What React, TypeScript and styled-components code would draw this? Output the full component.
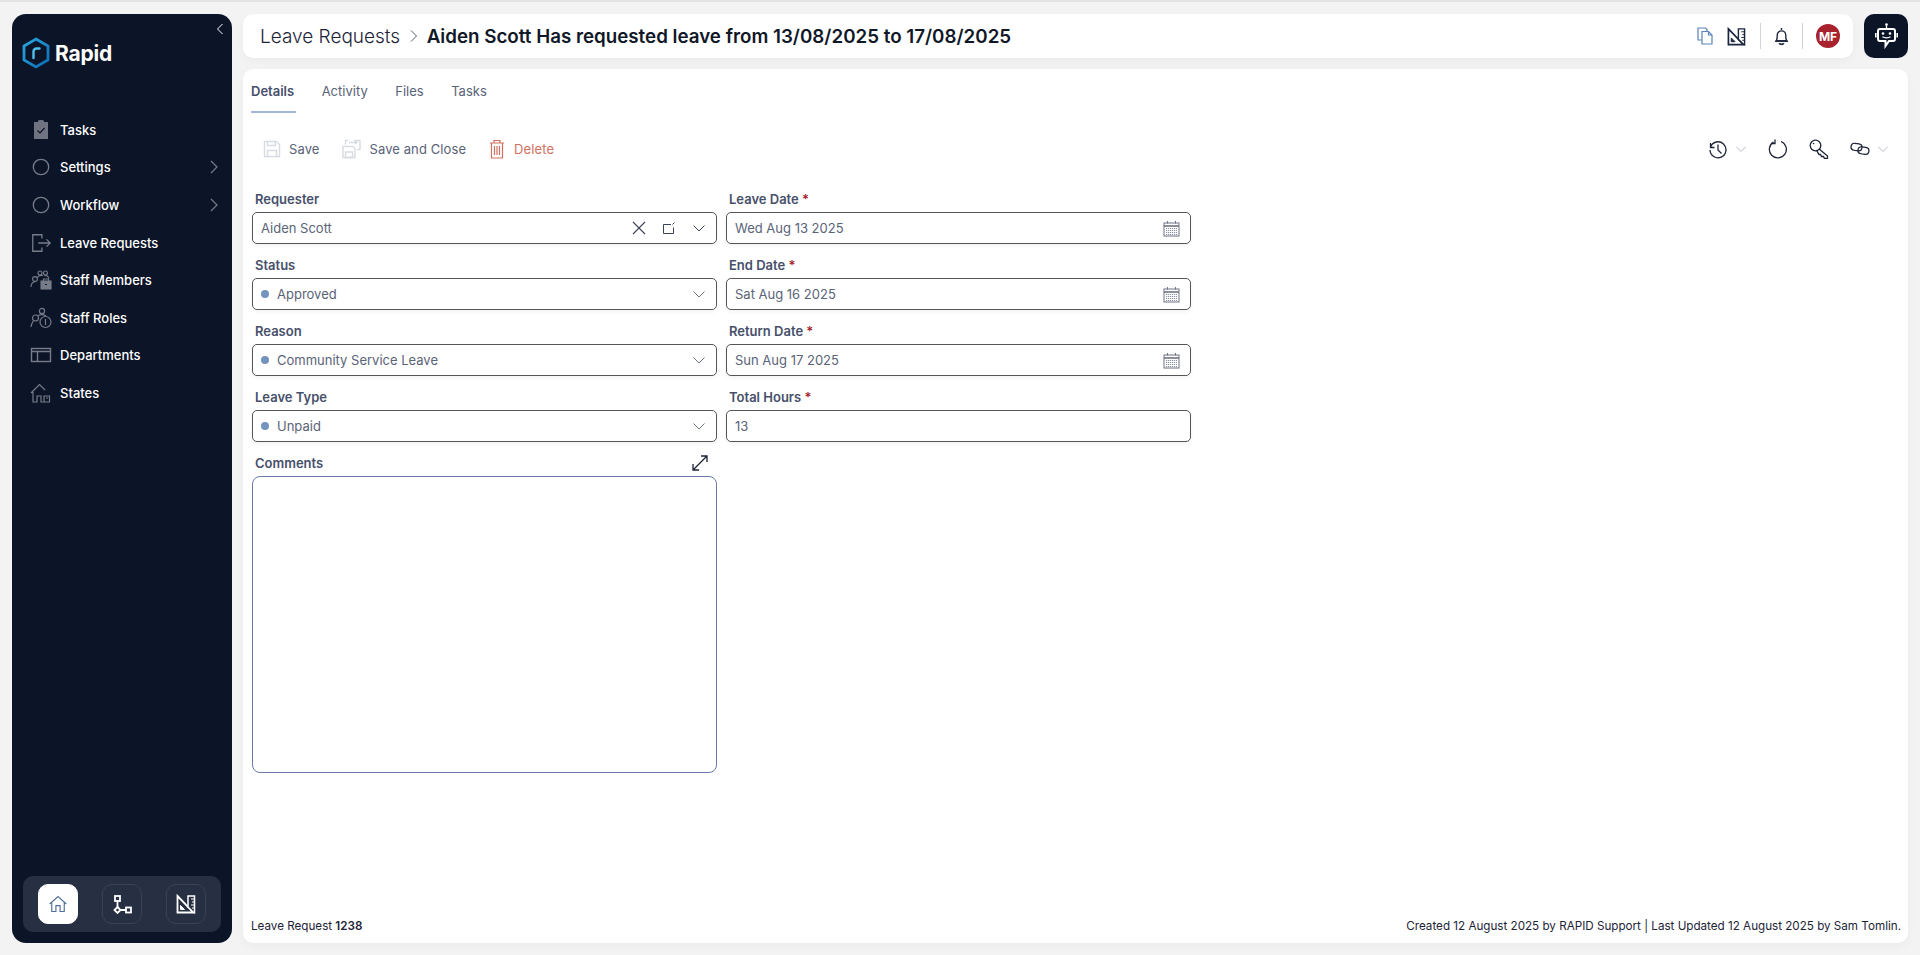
import styled, {createGlobalStyle} from "styled-components";
import type {ReactNode} from "react";

const font = `"Inter", "Open Sans", sans-serif`;

const GlobalStyle = createGlobalStyle`
    * {
        box-sizing: border-box;
    }
    html, body {
        margin: 0;
        padding: 0;
        height: 100%;
        background: #f3f3f3;
        font-family: ${font};
    }
`;

type IconProps = { size?: number; color?: string };

const TasksIcon = () => (
    <svg width="20" height="20" viewBox="0 0 20 20">
        <path d="M3 3h4V1.500h1.200A1.800 1.800 0 0 1 11.800 1.500H13V3h4v17H3z" fill="#6f7480" transform="translate(0 -1)"/>
        <path d="M6.500 10.500l2.500 2.500 4.500-5" fill="none" stroke="#0c1428" strokeWidth="1.200"/>
    </svg>
);
const CircleIcon = () => (
    <svg width="20" height="20" viewBox="0 0 20 20">
        <circle cx="10" cy="10" r="7.700" fill="none" stroke="#777c88" strokeWidth="1.300"/>
    </svg>
);
const LeaveIcon = () => (
    <svg width="22" height="22" viewBox="0 0 24 24" fill="none" stroke="#777c88" strokeWidth="1.400">
        <path d="M13 7V3H3v18h10v-4"/>
        <path d="M9 12h13M18 8l4 4-4 4"/>
    </svg>
);
const MembersIcon = () => (
    <svg width="22" height="22" viewBox="0 0 22 22" fill="none" stroke="#777c88" strokeWidth="1.100">
        <circle cx="5" cy="10" r="2.400"/>
        <circle cx="10" cy="4" r="2"/>
        <circle cx="15.500" cy="4" r="2"/>
        <path d="M1 18c0-3 2-5 4-5.300M7 9c1-2 4-3 6-2.500M14.500 6.500c2 0 4 1 4.500 3"/>
        <rect x="11" y="12" width="10" height="8" fill="#777c88"/>
        <path d="M13.500 12v-2h5v2"/>
        <path d="M15 15.500h2" stroke="#0c1428"/>
    </svg>
);
const RolesIcon = () => (
    <svg width="22" height="22" viewBox="0 0 22 22" fill="none" stroke="#777c88" strokeWidth="1.200">
        <circle cx="5.500" cy="11" r="3"/>
        <circle cx="12" cy="4" r="2.600"/>
        <circle cx="15.500" cy="15" r="5.500"/>
        <path d="M15.500 12v6M1 20c0-2 1-4 2.500-6.500M8 9c1-1.500 5-2 8 0"/>
    </svg>
);
const DepartmentsIcon = () => (
    <svg width="22" height="22" viewBox="0 0 22 22" fill="none" stroke="#777c88" strokeWidth="1.400">
        <rect x="1.500" y="4.500" width="19" height="13"/>
        <path d="M1.500 7.500h19M7.500 7.500v10"/>
    </svg>
);
const StatesIcon = () => (
    <svg width="22" height="22" viewBox="0 0 22 22" fill="none" stroke="#777c88" strokeWidth="1.200">
        <path d="M1 11l8.500-8.500L15 8M3 10v10h4v-6h4v6h8.500v-6H14v6"/>
        <path d="M16 16h2"/>
    </svg>
);

const LogoMark = () => (
    <svg width="28" height="32" viewBox="0 0 28 32" fill="none">
        <defs>
            <linearGradient id="hex" x1="0" y1="0" x2="1" y2="1">
                <stop offset="0" stopColor="#28a8e0"/>
                <stop offset="1" stopColor="#0d6cb5"/>
            </linearGradient>
        </defs>
        <path d="M14 2l12 7v14l-12 7-12-7V9z" stroke="url(#hex)" strokeWidth="2.800"/>
        <path d="M11.500 21v-6.500a3 3 0 0 1 3-3h3" stroke="#4fc0ee" strokeWidth="2.400" strokeLinecap="round"/>
    </svg>
);

const HomeIcon = () => (
    <svg width="20" height="20" viewBox="0 0 24 24" fill="none" stroke="#51709c" strokeWidth="1.400">
        <path d="M2 12l10-9 10 9M4.500 10v11h5v-7h5v7h5V10"/>
    </svg>
);
const FlowIcon = () => (
    <svg width="19" height="19" viewBox="0 0 19 19" fill="none" stroke="#fff" strokeWidth="1.800">
        <rect x="2" y="1" width="5" height="5"/>
        <path d="M4.500 6v6M8 15h5"/>
        <path d="M4.500 12l3 3-3 3-3-3z"/>
        <rect x="13" y="12.500" width="5" height="5"/>
    </svg>
);
const RulerIcon = ({size = 20, color = "#fff", shade = "#272f43"}: IconProps & { shade?: string }) => (
    <svg width={size} height={size} viewBox="0 0 20 20" fill="none" stroke={color}>
        <path d="M1.500 2l16 16.500h-16z" strokeWidth="1.800"/>
        <path d="M4.500 11.500l4 4h-4z" fill={color} strokeWidth="1"/>
        <path d="M12 2h6.500v16.500h-1L12 13z" fill={shade} strokeWidth="1.500"/>
        <path d="M15 5h3M16 8h2M15 11h3M16 14h2" strokeWidth="1"/>
    </svg>
);
const ChevronDown = ({size = 14, color = "#6e7686"}: IconProps) => (
    <svg width={size} height={size} viewBox="0 0 14 14" fill="none" stroke={color} strokeWidth="1">
        <path d="M1.500 4.500l5.500 5.500 5.500-5.500"/>
    </svg>
);
const ChevronRight = () => (
    <svg width="12" height="16" viewBox="0 0 12 16" fill="none" stroke="#777c88" strokeWidth="1.200">
        <path d="M3 2l6 6-6 6"/>
    </svg>
);
const CalendarIcon = () => (
    <svg width="17" height="17" viewBox="0 0 17 17" fill="none" stroke="#6d7382" strokeWidth="1">
        <rect x="1" y="3" width="15" height="13" fill="#fff"/>
        <path d="M1 6h15" strokeWidth="1.600"/>
        <path d="M4.500 1v2.500M12.500 1v2.500"/>
        <path d="M3 8.500h11M3 10.500h11M3 12.500h11M3 14.500h11" strokeDasharray="1.200 0.800" stroke="#8a90a0"/>
    </svg>
);
const SaveIcon = () => (
    <svg width="18" height="18" viewBox="0 0 18 18" fill="none" stroke="#d8dbe2" strokeWidth="1.400">
        <path d="M1.500 1.500h12l3 3v12h-15z"/>
        <path d="M4.500 1.500v4h8v-4M4.500 16.500v-6h9v6"/>
    </svg>
);
const SaveCloseIcon = () => (
    <svg width="20" height="20" viewBox="0 0 20 20" fill="none" stroke="#d8dbe2" strokeWidth="1.400">
        <path d="M2 7.500h10l2 2v9H2z"/>
        <path d="M4.500 13v5.500h7V13zM7 1.500H4.500v4M13 1.500h6v9h-3M8 3.500h8M14 2l2 1.500L14 5"/>
    </svg>
);
const TrashIcon = () => (
    <svg width="18" height="20" viewBox="-2 0 18 20" fill="none" stroke="#d2705f" strokeWidth="1.200">
        <path d="M0 4h14M4 4V1.500h6V4M1.500 4v15h11V4M4.500 7v9M7 7v9M9.500 7v9"/>
    </svg>
);
const CopyIcon = () => (
    <svg width="16" height="18" viewBox="0 0 16 18" fill="none" stroke="#5a84b8" strokeWidth="1.200">
        <path d="M1 1h7.500l1.500 1.500V13H1z"/>
        <path d="M5 4.500h6.500L15 8v9H5z" fill="#fff"/>
        <path d="M11.500 4.500V8H15"/>
    </svg>
);
const BellIcon = () => (
    <svg width="15" height="19" viewBox="0 0 16 19" fill="none" stroke="#242c44" strokeWidth="1.500">
        <path d="M8 .5v2M2.500 14c1-1.500 1-3 1-6a4.500 4.500 0 0 1 9 0c0 3 0 4.500 1 6zM1 14.500h14"/>
        <path d="M5.500 16.800c1 1.500 4 1.500 5 0" strokeWidth="2"/>
    </svg>
);
const BotIcon = () => (
    <svg width="23" height="26" viewBox="0 0 23 26" fill="none" stroke="#fff" strokeWidth="2">
        <circle cx="11.500" cy="1.600" r="1.300" fill="#fff" stroke="none"/>
        <path d="M11.500 2.500v3" strokeWidth="1.300"/>
        <path d="M5 6h13a2 2 0 0 1 2 2v8a2 2 0 0 1-2 2h-4l-3.500 5v-5H5a2 2 0 0 1-2-2V8a2 2 0 0 1 2-2z"/>
        <path d="M.8 10v4.500M22.200 10v4.500" strokeWidth="1.600"/>
        <circle cx="8" cy="10.500" r="1.300" fill="#fff" stroke="none"/>
        <circle cx="15" cy="10.500" r="1.300" fill="#fff" stroke="none"/>
        <path d="M7.500 13.800c2 1.300 6 1.300 8 0" strokeWidth="1.300"/>
    </svg>
);
const HistoryIcon = () => (
    <svg width="20" height="20" viewBox="0 0 20 20" fill="none" stroke="#1d2438" strokeWidth="1.300">
        <path d="M2.500 4v4.500h4M2.500 8A8 8 0 1 1 2 11"/>
        <path d="M10 5.500V11l3.500 3.500"/>
    </svg>
);
const RefreshIcon = () => (
    <svg width="20" height="20" viewBox="0 0 20 20" fill="none" stroke="#1d2438" strokeWidth="1.300">
        <path d="M13 2.500a8.500 8.500 0 1 1-7.500.6"/>
        <path d="M7 .5v4H3"/>
    </svg>
);
const KeyIcon = () => (
    <svg width="20" height="20" viewBox="0 0 20 20" fill="none" stroke="#1d2438" strokeWidth="1.300">
        <circle cx="6.500" cy="6.500" r="5.300"/>
        <circle cx="4.500" cy="4.500" r="0.800" fill="#1d2438" stroke="none"/>
        <path d="M10.500 10.200l8 6.800V19.500h-3L14.500 17.500h-2l-1-2H10L7.800 11.700"/>
    </svg>
);
const LinkIcon = () => (
    <svg width="20" height="14" viewBox="0 0 20 14" fill="none" stroke="#1d2438" strokeWidth="1.200">
        <rect x="1" y="1.500" width="11" height="7" rx="3.500" transform="rotate(8 6 5)"/>
        <rect x="8" y="5" width="11" height="7" rx="3.500" transform="rotate(8 13 8)"/>
    </svg>
);
const ClearIcon = () => (
    <svg width="14" height="14" viewBox="0 0 14 14" fill="none" stroke="#3a4255" strokeWidth="1.100">
        <path d="M1 1l12 12M13 1L1 13"/>
    </svg>
);
const OpenIcon = () => (
    <svg width="14" height="14" viewBox="0 0 14 14" fill="none" stroke="#3a4255" strokeWidth="1">
        <path d="M9 3.500H1.500v9h10V6.500"/>
        <path d="M10.500 3.500L12.500 1.500"/>
    </svg>
);
const ExpandIcon = () => (
    <svg width="18" height="18" viewBox="0 0 18 18" fill="none" stroke="#1d2438" strokeWidth="1.300">
        <path d="M2 16L16 2M10 2h6v6M2 10v6h6"/>
    </svg>
);

const navItems = [
    {label: "Tasks", icon: <TasksIcon/>},
    {label: "Settings", icon: <CircleIcon/>, more: true},
    {label: "Workflow", icon: <CircleIcon/>, more: true},
    {label: "Leave Requests", icon: <LeaveIcon/>},
    {label: "Staff Members", icon: <MembersIcon/>},
    {label: "Staff Roles", icon: <RolesIcon/>},
    {label: "Departments", icon: <DepartmentsIcon/>},
    {label: "States", icon: <StatesIcon/>},
];

const Field = ({label, required, children}: { label: string; required?: boolean; children: ReactNode }) => (
    <FieldWrap>
        <FieldLabel>{label}{required && <Required> *</Required>}</FieldLabel>
        {children}
    </FieldWrap>
);

const SelectField = ({label, value}: { label: string; value: string }) => (
    <Field label={label}>
        <InputBox>
            <Dot/>
            <Value>{value}</Value>
            <ChevronDown/>
        </InputBox>
    </Field>
);

const DateField = ({label, value}: { label: string; value: string }) => (
    <Field label={label} required>
        <InputBox>
            <Value>{value}</Value>
            <CalendarIcon/>
        </InputBox>
    </Field>
);

export default function App() {
    return (
        <>
            <GlobalStyle/>
            <Page>
                <Sidebar>
                    <Collapse>
                        <svg width="8" height="12" viewBox="0 0 8 12" fill="none" stroke="#fff" strokeWidth="1">
                            <path d="M6.500 1l-5 5 5 5"/>
                        </svg>
                    </Collapse>
                    <Logo>
                        <LogoMark/>
                        <LogoText>Rapid</LogoText>
                    </Logo>
                    <Nav>
                        {navItems.map((item) => (
                            <NavItem key={item.label}>
                                <NavIcon>{item.icon}</NavIcon>
                                <NavLabel>{item.label}</NavLabel>
                                {item.more && <ChevronRight/>}
                            </NavItem>
                        ))}
                    </Nav>
                    <Dock>
                        <DockButton $active><HomeIcon/></DockButton>
                        <DockButton><FlowIcon/></DockButton>
                        <DockButton><RulerIcon/></DockButton>
                    </Dock>
                </Sidebar>
                <Content>
                    <TopRow>
                        <Header>
                            <Crumb>Leave Requests</Crumb>
                            <CrumbSep>
                                <svg width="10" height="14" viewBox="0 0 10 14" fill="none" stroke="#555c6c" strokeWidth="1">
                                    <path d="M2 1.500l5.500 5.500L2 12.500"/>
                                </svg>
                            </CrumbSep>
                            <Title>Aiden Scott Has requested leave from 13/08/2025 to 17/08/2025</Title>
                            <HeaderActions>
                                <HeaderIcon><CopyIcon/></HeaderIcon>
                                <HeaderIcon $gap><RulerIcon size={19} color="#1a2540" shade="#fff"/></HeaderIcon>
                                <Divider $gap/>
                                <HeaderIcon><BellIcon/></HeaderIcon>
                                <Divider/>
                                <Avatar>MF</Avatar>
                            </HeaderActions>
                        </Header>
                        <BotButton><BotIcon/></BotButton>
                    </TopRow>
                    <Card>
                        <Tabs>
                            <Tab $active>Details</Tab>
                            <Tab>Activity</Tab>
                            <Tab>Files</Tab>
                            <Tab>Tasks</Tab>
                        </Tabs>
                        <Toolbar>
                            <Action><SaveIcon/>Save</Action>
                            <Action><SaveCloseIcon/>Save and Close</Action>
                            <Action $danger><TrashIcon/>Delete</Action>
                            <ToolbarRight>
                                <ToolGroup><HistoryIcon/><ChevronDown size={12} color="#a9aeb8"/></ToolGroup>
                                <ToolGroup><RefreshIcon/></ToolGroup>
                                <ToolGroup><KeyIcon/></ToolGroup>
                                <ToolGroup><LinkIcon/><ChevronDown size={12} color="#a9aeb8"/></ToolGroup>
                            </ToolbarRight>
                        </Toolbar>
                        <Form>
                            <Field label="Requester">
                                <InputBox>
                                    <Value>Aiden Scott</Value>
                                    <RequesterIcons>
                                        <ClearIcon/>
                                        <OpenIcon/>
                                        <ChevronDown color="#3a4255"/>
                                    </RequesterIcons>
                                </InputBox>
                            </Field>
                            <DateField label="Leave Date" value="Wed Aug 13 2025"/>
                            <SelectField label="Status" value="Approved"/>
                            <DateField label="End Date" value="Sat Aug 16 2025"/>
                            <SelectField label="Reason" value="Community Service Leave"/>
                            <DateField label="Return Date" value="Sun Aug 17 2025"/>
                            <SelectField label="Leave Type" value="Unpaid"/>
                            <Field label="Total Hours" required>
                                <InputBox><Value>13</Value></InputBox>
                            </Field>
                            <CommentsField>
                                <CommentsHead>
                                    <FieldLabel>Comments</FieldLabel>
                                    <ExpandIcon/>
                                </CommentsHead>
                                <CommentsBox/>
                            </CommentsField>
                        </Form>
                        <Footer>
                            <span>Leave Request <strong>1238</strong></span>
                            <span>Created 12 August 2025 by RAPID Support | Last Updated 12 August 2025 by Sam Tomlin.</span>
                        </Footer>
                    </Card>
                </Content>
            </Page>
        </>
    );
}

const Page = styled.div`
    display: flex;
    gap: 11px;
    height: 955px;
    padding: 12px 12px 12px;
    background: #f3f3f3;
    border-top: 2px solid #e3e3e3;
`;
const Sidebar = styled.aside`
    position: relative;
    display: flex;
    flex-direction: column;
    flex: 0 0 220px;
    background: #0c1428;
    border-radius: 14px;
`;
const Collapse = styled.button`
    position: absolute;
    top: 7px;
    right: 6px;
    display: flex;
    padding: 2px;
    background: none;
    border: 0;
`;
const Logo = styled.div`
    display: flex;
    align-items: center;
    gap: 5px;
    padding: 23px 0 0 10px;
`;
const LogoText = styled.span`
    font-size: 21px;
    font-weight: 700;
    letter-spacing: -0.2px;
    color: #fff;
`;
const Nav = styled.nav`
    display: flex;
    flex-direction: column;
    padding: 42px 12px 0 18px;
`;
const NavItem = styled.div`
    display: flex;
    align-items: center;
    height: 37.6px;
`;
const NavIcon = styled.span`
    display: flex;
    justify-content: center;
    flex: 0 0 22px;
    margin-right: 8px;
`;
const NavLabel = styled.span`
    flex: 1;
    font-size: 13px;
    font-weight: 500;
    color: #fff;
`;
const Dock = styled.div`
    display: flex;
    justify-content: space-between;
    gap: 23px;
    margin: auto 11px 11px;
    padding: 8px 15px;
    background: #272f43;
    border-radius: 10px;
`;
const DockButton = styled.button<{ $active?: boolean }>`
    display: flex;
    align-items: center;
    justify-content: center;
    width: 40px;
    height: 40px;
    padding: 0;
    background: ${(p) => (p.$active ? "#fff" : "transparent")};
    border: 1px solid ${(p) => (p.$active ? "#fff" : "#3a4256")};
    border-radius: 10px;
`;
const Content = styled.main`
    display: flex;
    flex-direction: column;
    flex: 1;
    gap: 11px;
    min-width: 0;
`;
const TopRow = styled.div`
    display: flex;
    gap: 11px;
    height: 44px;
`;
const Header = styled.header`
    display: flex;
    align-items: center;
    flex: 1;
    padding: 0 13px 0 17px;
    background: #fff;
    border-radius: 10px;
    box-shadow: 0 3px 8px rgba(0, 0, 0, 0.04);
`;
const Crumb = styled.span`
    font-size: 19px;
    font-weight: 300;
    color: #1d2438;
`;
const CrumbSep = styled.span`
    display: flex;
    margin: 0 7.5px 0 9px;
`;
const Title = styled.h1`
    margin: 0;
    font-size: 18.75px;
    font-weight: 600;
    color: #101828;
`;
const HeaderActions = styled.div`
    display: flex;
    align-items: center;
    gap: 13px;
    margin-left: auto;
`;
const HeaderIcon = styled.span<{ $gap?: boolean }>`
    display: flex;
    margin-left: ${(p) => (p.$gap ? "1px" : "0")};
`;
const Divider = styled.span<{ $gap?: boolean }>`
    width: 1px;
    height: 26px;
    margin-left: ${(p) => (p.$gap ? "1px" : "0")};
    background: #d3d3d3;
`;
const Avatar = styled.span`
    display: flex;
    align-items: center;
    justify-content: center;
    width: 24px;
    height: 24px;
    font-size: 12px;
    font-weight: 700;
    color: #fff;
    background: #a8222d;
    border-radius: 50%;
`;
const BotButton = styled.button`
    display: flex;
    align-items: center;
    justify-content: center;
    flex: 0 0 44px;
    padding: 0;
    background: #0c1428;
    border: 0;
    border-radius: 10px;
`;
const Card = styled.section`
    display: flex;
    flex-direction: column;
    flex: 1;
    min-height: 0;
    padding: 0 7px 0 8px;
    background: #fff;
    border-radius: 10px;
    box-shadow: 0 3px 8px rgba(0, 0, 0, 0.04);
`;
const Tabs = styled.div`
    display: flex;
    gap: 25.5px;
    height: 44px;
`;
const Tab = styled.div<{ $active?: boolean }>`
    display: flex;
    align-items: center;
    padding: 2px 2px 0 0;
    font-size: 13px;
    font-weight: ${(p) => (p.$active ? 600 : 400)};
    color: ${(p) => (p.$active ? "#47506b" : "#5a6378")};
    border-bottom: 2px solid ${(p) => (p.$active ? "#a3b6dc" : "transparent")};
`;
const Toolbar = styled.div`
    display: flex;
    align-items: center;
    gap: 22px;
    height: 38px;
    margin-top: 17px;
    padding: 0 12px 0 12px;
`;
const Action = styled.button<{ $danger?: boolean }>`
    display: flex;
    align-items: center;
    gap: 8px;
    padding: 0;
    font-family: ${font};
    font-size: 13px;
    letter-spacing: 0.1px;
    color: ${(p) => (p.$danger ? "#d2705f" : "#5a6378")};
    background: none;
    border: 0;
`;
const ToolbarRight = styled.div`
    display: flex;
    align-items: center;
    gap: 21px;
    margin-left: auto;
`;
const ToolGroup = styled.span`
    display: flex;
    align-items: center;
    gap: 7px;
`;
const Form = styled.div`
    display: grid;
    grid-template-columns: 465px 465px;
    grid-auto-rows: min-content;
    column-gap: 9px;
    row-gap: 12px;
    margin-top: 22px;
    padding-left: 1px;
`;
const FieldWrap = styled.div`
    display: flex;
    flex-direction: column;
    gap: 4px;
`;
const FieldLabel = styled.label`
    padding-left: 3px;
    font-size: 13px;
    line-height: 18px;
    font-weight: 600;
    color: #47506b;
`;
const Required = styled.span`
    color: #a8222d;
`;
const InputBox = styled.div`
    display: flex;
    align-items: center;
    height: 32px;
    padding: 0 10px 0 8px;
    background: #fff;
    border: 1px solid #555;
    border-radius: 5px;
    box-shadow: 0 2px 4px rgba(0, 0, 0, 0.05);
`;
const Dot = styled.span`
    flex: 0 0 8px;
    height: 8px;
    margin-right: 8px;
    background: #7394bc;
    border-radius: 50%;
`;
const Value = styled.span`
    flex: 1;
    font-size: 13px;
    color: #5a6378;
`;
const RequesterIcons = styled.span`
    display: flex;
    align-items: center;
    gap: 16px;
`;
const CommentsField = styled.div`
    display: flex;
    flex-direction: column;
    grid-column: 1;
    gap: 4px;
`;
const CommentsHead = styled.div`
    display: flex;
    align-items: center;
    justify-content: space-between;
    padding-right: 8px;
`;
const CommentsBox = styled.div`
    height: 297px;
    border: 1px solid #6a7ba8;
    border-radius: 8px;
`;
const Footer = styled.footer`
    display: flex;
    justify-content: space-between;
    margin-top: auto;
    padding: 0 0 9px;
    font-size: 11.65px;
    line-height: 16px;
    color: #1d2438;

    strong {
        font-weight: 600;
    }
`;
